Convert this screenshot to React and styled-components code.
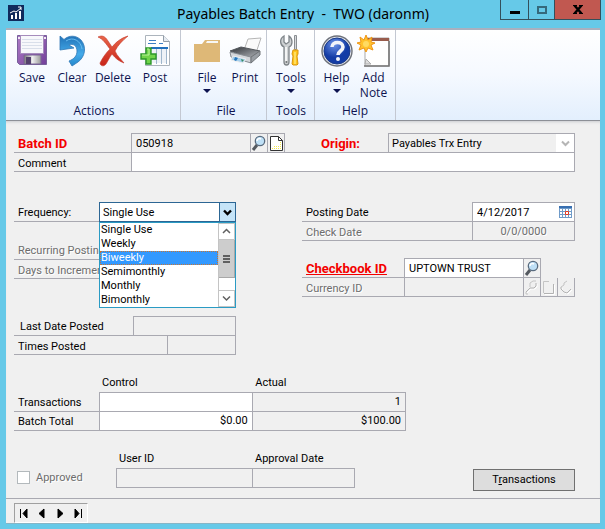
import React, { useState } from "react";
import styled, { createGlobalStyle, css } from "styled-components";

const GlobalStyle = createGlobalStyle`
	* {
		box-sizing: border-box;
	}
	body {
		margin: 0;
		background: #66c9e8;
		font-family: Roboto, "Liberation Sans", sans-serif;
		font-size: 11px;
		color: #000;
	}
	button, input, select {
		font: inherit;
		color: inherit;
		margin: 0;
	}
`;

const line = "#a9a9b1";

const Window = styled.main`
	display: flex;
	flex-direction: column;
	min-height: 100vh;
	padding: 0 5px 5px 6px;
	background: #66c9e8;
`;

const TitleBar = styled.header`
	position: relative;
	display: flex;
	justify-content: center;
	height: 28px;
`;

const AppIcon = styled.svg`
	position: absolute;
	left: 2px;
	top: 5px;
`;

const Title = styled.h1`
	margin: 0;
	font: 400 14px/28px "Noto Sans", "Open Sans", sans-serif;
	white-space: pre;
`;

const WindowControls = styled.div`
	position: absolute;
	top: 0;
	right: -1px;
	display: flex;
	border: 1px solid #33505c;
	border-top: 0;
`;

const WindowButton = styled.button`
	display: flex;
	align-items: center;
	justify-content: center;
	width: ${(p) => p.$width}px;
	height: 19px;
	padding: 0;
	border: 0;
	background: ${(p) => (p.$close ? "#c15850" : "transparent")};
	& + & {
		border-left: 1px solid #33505c;
	}
`;

const Ribbon = styled.nav`
	display: flex;
	height: 93px;
	border-top: 2px solid #a9b0bf;
	border-bottom: 1px solid #8d9097;
	background: linear-gradient(#fff, #f5f9ff 50%, #e3effd);
	font-family: "Open Sans", "Noto Sans", sans-serif;
	font-size: 12px;
	color: #0d1350;
`;

const RibbonGroup = styled.section`
	display: flex;
	flex-direction: column;
	justify-content: space-between;
	padding: 4px ${(p) => p.$end}px 2px ${(p) => p.$start}px;
	border-right: 1px solid #c3c8d2;
`;

const RibbonItems = styled.div`
	display: flex;
	align-items: flex-start;
`;

const GroupTitle = styled.h2`
	margin: 0;
	font-size: 12px;
	line-height: 15px;
	font-weight: 400;
	text-align: center;
`;

const RibbonButton = styled.button`
	display: flex;
	flex-direction: column;
	align-items: center;
	width: ${(p) => p.$width}px;
	padding: 0;
	border: 0;
	background: none;
	line-height: 15px;
	svg {
		flex: none;
	}
`;

const RibbonLabel = styled.span`
	margin-top: 3px;
`;

const Caret = styled.span`
	margin-top: 4px;
	border: 4px solid transparent;
	border-top-color: #0d1350;
	border-bottom: 0;
`;

const Form = styled.form`
	flex: 1;
	padding: 12px 25px 7px 8px;
	border-bottom: 1px solid ${line};
	background: #f0f0f0;
	box-shadow: inset 0 3px 3px -2px #c9cbd0;
`;

const Columns = styled.div`
	display: grid;
	grid-template-columns: 222px 1fr;
	column-gap: 66px;
	margin-top: 30px;
`;

const FieldGroup = styled.div`
	margin-top: ${(p) => p.$gap || 0}px;
`;

const boxBorders = css`
	border: 1px solid ${line};
	border-top-width: 0;
`;

const Row = styled.div`
	position: relative;
	display: flex;
	height: 20px;
	& + & {
		height: 19px;
	}
	&:first-child > :not(label) {
		border-top-width: 1px;
	}
`;

const disabledText = css`
	color: #6d6d6d;
	text-shadow: 1px 1px 0 #fff;
`;

const Label = styled.label`
	flex: ${(p) => (p.$width ? `0 0 ${p.$width}px` : "1")};
	padding-left: ${(p) => p.$indent || 4}px;
	border-bottom: ${(p) => (p.$plain ? 0 : 1)}px solid ${line};
	line-height: 21px;
	white-space: nowrap;
	${(p) => p.$disabled && disabledText}
	${(p) =>
		p.$required &&
		css`
			color: #f40000;
			font-size: 13px;
			font-weight: 700;
		`}
`;

const Field = styled.input`
	${boxBorders}
	flex: ${(p) => (p.$width ? `0 0 ${p.$width}px` : "1")};
	min-width: 0;
	padding: 0 4px;
	border-radius: 0;
	outline: 0;
	background: ${(p) => (p.$flat ? "#f0f0f0" : "#fff")};
	text-align: ${(p) => p.$align || "left"};
	${(p) => p.$disabled && disabledText}
`;

// sits one pixel over the row above so its top border doubles as that row's line
const CommentRow = styled(Row)`
	margin-top: -1px;
	&& {
		height: 20px;
	}
	label {
		padding-top: 1px;
	}
	input {
		border-top-width: 1px;
	}
`;

const LookupButton = styled.button`
	${boxBorders}
	display: flex;
	align-items: center;
	justify-content: center;
	flex: 0 0 17px;
	padding: 0;
	border-left: 0;
	background: #f0f0f0;
`;

const DateBox = styled.span`
	${boxBorders}
	display: flex;
	align-items: center;
	flex: 0 0 103px;
	min-width: 0;
	padding-right: 2px;
	background: #fff;
`;

const DateInput = styled.input`
	flex: 1;
	min-width: 0;
	padding: 0 4px;
	border: 0;
	outline: 0;
	background: none;
`;

const IconButton = styled.button`
	display: flex;
	align-items: center;
	padding: 0;
	border: 0;
	background: none;
`;

const SelectBox = styled.span`
	${boxBorders}
	display: flex;
	flex: 0 0 ${(p) => p.$width}px;
	border-color: ${(p) => (p.$active ? "#2c6694" : line)};
	background: #fff;
`;

const Select = styled.select`
	appearance: none;
	flex: 1;
	min-width: 0;
	padding: 0 3px;
	border: 0;
	border-radius: 0;
	outline: 0;
	background: ${(p) => (p.$flat ? "#f0f0f0" : "#fff")};
`;

const SelectArrow = styled.span`
	display: flex;
	align-items: center;
	justify-content: center;
	width: ${(p) => (p.$active ? 16 : 18)}px;
	color: ${(p) => (p.$active ? "#000" : "#b5b5b5")};
	${(p) =>
		p.$active &&
		css`
			border-left: 1px solid #2c6694;
			background: #c5e4f8;
		`}
`;

const DropDown = styled.div`
	position: absolute;
	z-index: 2;
	top: 20px;
	left: 85px;
	right: 0;
	display: flex;
	height: 86px;
	border: 1px solid #2a9bc4;
	background: #fff;
`;

const OptionList = styled.ul`
	flex: 1;
	margin: 0;
	padding: 0;
	list-style: none;
	overflow: hidden;
`;

const Option = styled.li`
	height: 14px;
	padding-left: 1px;
	line-height: 14px;
	${(p) =>
		p.$active &&
		css`
			outline: 1px dotted #c87533;
			outline-offset: -1px;
			background: #3399ff;
			color: #fff;
		`}
`;

const ScrollTrack = styled.div`
	display: flex;
	flex-direction: column;
	width: 17px;
	border-left: 1px solid #c4c4c4;
`;

const ScrollEnd = styled.span`
	display: flex;
	align-items: center;
	justify-content: center;
	height: 17px;
	border: 1px solid #c4c4c4;
	border-left: 0;
	color: #606060;
`;

const ScrollThumb = styled.span`
	display: flex;
	flex-direction: column;
	align-items: center;
	justify-content: center;
	gap: 1px;
	height: 38px;
	margin-bottom: auto;
	border: 1px solid #a8a8a8;
	border-width: 0 1px 1px 0;
	background: #cdcdcd;
	i {
		width: 7px;
		height: 2px;
		background: #606060;
	}
`;

const Totals = styled.table`
	width: 392px;
	margin-top: 18px;
	border-collapse: collapse;
	table-layout: fixed;
	tbody tr {
		height: 19px;
	}
	th {
		padding: 0 0 0 4px;
		font-weight: 400;
		text-align: left;
	}
	thead th {
		height: 19px;
		padding: 0 0 0 3px;
	}
	tbody th {
		padding-top: 2px;
		border-bottom: 1px solid ${line};
	}
	td {
		height: 19px;
		padding: 0 4px 0 0;
		border: 1px solid ${line};
		text-align: right;
	}
	col:first-child {
		width: 85px;
	}
`;

const TotalInput = styled.input`
	display: block;
	width: 100%;
	height: 18px;
	padding: 0;
	border: 0;
	outline: 0;
	background: none;
	text-align: right;
`;

const ControlCell = styled.td`
	background: #fff;
`;

const ApprovalRow = styled.div`
	display: flex;
	align-items: flex-end;
	margin-top: 19px;
`;

const Approved = styled.label`
	display: flex;
	align-items: center;
	gap: 6px;
	width: 102px;
	height: 26px;
	padding-left: 3px;
	${disabledText}
	input {
		appearance: none;
		width: 13px;
		height: 13px;
		border: 1px solid #b3b9bc;
		background: #fff;
	}
`;

const Stacked = styled.div`
	display: flex;
	flex-direction: column;
	width: ${(p) => p.$width}px;
	margin: 0 -1px 3px 0;
	label {
		padding-left: 3px;
		line-height: 18px;
	}
	input {
		width: 100%;
		height: 20px;
		border: 1px solid ${line};
		background: #f0f0f0;
	}
`;

const PushButton = styled.button`
	width: 102px;
	height: 22px;
	margin-left: auto;
	padding: 0;
	border: 1px solid #707070;
	background: #dddddd;
`;

const Footer = styled.footer`
	padding: 4px 8px 0;
	border-bottom: 1px solid #86b5c6;
	background: #f0f0f0;
`;

const Pager = styled.div`
	display: flex;
	justify-content: space-around;
	width: 74px;
	height: 20px;
	border: 1px solid #a0a0a0;
	border-right-color: #fff;
	border-bottom-color: #fff;
`;

const SaveIcon = () => (
	<svg width="32" height="33" viewBox="0 0 32 33">
		<defs>
			<linearGradient id="save" x1="0" y1="0" x2="1" y2="1">
				<stop offset="0" stopColor="#b07cc6" />
				<stop offset="1" stopColor="#73409a" />
			</linearGradient>
			<linearGradient id="metal">
				<stop offset="0" stopColor="#777" />
				<stop offset=".5" stopColor="#eee" />
				<stop offset="1" stopColor="#999" />
			</linearGradient>
		</defs>
		<path d="M1.500 1.500h29v29h-27l-2-2z" fill="url(#save)" stroke="#77609a" />
		<path d="M4.500 1.500h23v18h-23z" fill="#f7f8fb" stroke="#a68cbc" />
		<path d="M6 5.500h20M6 8.500h20M6 11.500h20M6 14.500h20" stroke="#d9dfea" />
		<path d="M8 21h17v9H8z" fill="url(#metal)" stroke="#796494" />
		<path d="M10 23h5v7h-5z" fill="#54426c" />
		<path d="M2 3h2v2H2zM28 3h2v2h-2z" fill="#f2e9f5" />
	</svg>
);

const ClearIcon = () => (
	<svg width="32" height="33" viewBox="0 0 32 33">
		<defs>
			<linearGradient id="undo" x1="0" y1="0" x2="0" y2="1">
				<stop offset="0" stopColor="#2173b8" />
				<stop offset=".6" stopColor="#45abea" />
				<stop offset="1" stopColor="#2487cb" />
			</linearGradient>
		</defs>
		<path
			d="M4 2l4 3.500C13 1 20 1 25 6c6 7 4 17-3 22l-6 4-3-5c5-2 8-5 8-10 0-5-4-8-8-6l5 3-14 2z"
			fill="url(#undo)"
			stroke="#3077b5"
			strokeWidth=".8"
			strokeLinejoin="round"
		/>
		<path d="M10 7c7-5 15 0 16 8" fill="none" stroke="#69bcef" />
	</svg>
);

const DeleteIcon = () => (
	<svg width="32" height="33" viewBox="0 0 32 33">
		<defs>
			<linearGradient id="del" x2="0" y2="1">
				<stop offset="0" stopColor="#e8664a" />
				<stop offset="1" stopColor="#c92419" />
			</linearGradient>
		</defs>
		<path
			d="M1 3c4-2 7-1 10 4l4 6c4-5 9-9 16-11-6 5-10 9-13 15 2 5 6 8 9 12-5-2-8-4-12-9-3 4-4 7-6 10-2 3-6 2-6-1 3-6 6-10 10-14C9 10 6 5 1 3z"
			fill="url(#del)"
			stroke="#c33a2c"
			strokeWidth=".6"
		/>
	</svg>
);

const PostIcon = () => (
	<svg width="32" height="33" viewBox="0 0 32 33">
		<path d="M6.500 1.500h18l6 6v24h-24z" fill="#fff" stroke="#acb4bc" />
		<path d="M24.500 1.500v6h6" fill="#e6ebf1" stroke="#929ca7" />
		<path d="M10 6.500h7M9 9.500h8M20 9.500h4" stroke="#3f7fc4" />
		<path d="M13 14h15v15H13z" fill="#eef2f7" />
		<path d="M12 14h17" stroke="#2270bd" strokeWidth="2" />
		<path d="M17.500 15v15M22.500 15v15M27.500 15v15" stroke="#9fb6cc" />
		<path d="M7 14h5v6h5v5h-5v5H7v-5H2v-5h5z" fill="#70d44a" stroke="#2b962a" strokeWidth="1.4" />
		<path d="M8 15h2v6H3" stroke="#b8f497" fill="none" />
	</svg>
);

const FolderIcon = () => (
	<svg width="32" height="33" viewBox="0 0 32 33">
		<path d="M3 10h8l3-4h15v22H3z" fill="#deb877" />
		<path d="M15 9l1-2h11v2z" fill="#f7f7f5" />
	</svg>
);

const PrintIcon = () => (
	<svg width="34" height="33" viewBox="0 0 34 33">
		<defs>
			<linearGradient id="prn" x1="0" y1="0" x2="1" y2="1">
				<stop offset="0" stopColor="#2f3237" />
				<stop offset="1" stopColor="#b5b9be" />
			</linearGradient>
		</defs>
		<path d="M20 5l13-1-5 15-12-3z" fill="#fafafa" stroke="#b5b5b5" />
		<path d="M2 17l11-4 19 4-9 7z" fill="url(#prn)" stroke="#53575c" />
		<path d="M2 18l21 5v6L3 23z" fill="#d3d6da" stroke="#868b91" />
		<path d="M23 23l9-6v4l-9 8z" fill="#999ea4" stroke="#717579" />
		<path d="M5 22l13 3-3 4-12-3z" fill="#a6cfec" stroke="#eee" />
		<path d="M7 23l3 1-2 3-2-1z" fill="#2776bb" />
		<path d="M13 25l3 1-2 2z" fill="#398b62" />
	</svg>
);

const ToolsIcon = () => (
	<svg width="32" height="33" viewBox="0 0 32 33">
		<path
			d="M9 2v6l2 2 3-2V2c4 3 4 9 0 11v15c0 4-5 4-5 0V13C5 11 4 5 9 2z"
			fill="#ced1d3"
			stroke="#7f8589"
			strokeWidth="1.3"
		/>
		<path d="M11 13v14" stroke="#fff" strokeWidth="1.5" />
		<circle cx="11.500" cy="28" r="1" fill="#737779" />
		<path d="M19.500 1.500h2v14h-2z" fill="#d6d8db" stroke="#898d91" />
		<path d="M18 16h5v4l-1 2 1 8-1 1h-4l-1-1 1-8-1-2z" fill="#ffc51b" stroke="#d99510" />
		<path d="M20 18v12" stroke="#ffe579" strokeWidth="1.5" />
	</svg>
);

const HelpIcon = () => (
	<svg width="34" height="33" viewBox="0 0 34 33">
		<defs>
			<radialGradient id="help" cx=".4" cy=".25">
				<stop offset="0" stopColor="#6e94e8" />
				<stop offset="1" stopColor="#133ca6" />
			</radialGradient>
		</defs>
		<circle cx="17" cy="17" r="15" fill="#e4e6eb" stroke="#6c7079" strokeWidth="1.4" />
		<circle cx="17" cy="17" r="13" fill="url(#help)" stroke="#193a88" />
		<path
			d="M12 13c0-6 11-6 11 0 0 4-5 4-5 8"
			fill="none"
			stroke="#f3f5fa"
			strokeWidth="3.6"
		/>
		<circle cx="18" cy="25" r="2" fill="#f3f5fa" />
	</svg>
);

const NoteIcon = () => (
	<svg width="34" height="33" viewBox="0 0 34 33">
		<path d="M8 4h24v28H8z" fill="#fff" stroke="#a9a9a9" />
		<path d="M8 4h24v3H8z" fill="#985c4d" />
		<path d="M32 7v25H7" fill="none" stroke="#777" strokeWidth="1.6" />
		<path d="M9 25l5 5H8z" fill="#ddd" stroke="#aaa" />
		<path
			d="M9 1l2 5 4-3-1 5 4 1-4 2 2 5-5-2-2 4-2-4-5 2 2-5-4-2 4-1-1-5 4 3z"
			fill="#ffc22d"
			stroke="#f09516"
		/>
		<circle cx="9" cy="10" r="3" fill="#ffdb62" />
	</svg>
);

const MagnifierIcon = () => (
	<svg width="16" height="17" viewBox="0 0 16 17">
		<path d="M6 10l-4 5" stroke="#555a60" strokeWidth="3" />
		<circle cx="9" cy="6" r="4.7" fill="#bfe0f6" stroke="#596b7e" strokeWidth="1.3" />
		<path d="M6 6c0-2 2-3 4-2" stroke="#fff" strokeWidth="1.5" fill="none" />
	</svg>
);

const PageIcon = () => (
	<svg width="13" height="15" viewBox="0 0 13 15">
		<path d="M.5.5h8l4 4v10H.5z" fill="#fff" stroke="#333" />
		<path d="M8.500.5v4h4" fill="none" stroke="#333" />
		<path d="M2 12.500h9M4 10.500h7M10.500 6v4" stroke="#f4e94a" strokeDasharray="1 1" fill="none" />
	</svg>
);

const GhostIcon = ({ d, shadow }) => (
	<svg width="16" height="17" viewBox="0 0 16 17" fill="none">
		<path d={shadow} stroke="#fff" transform="translate(1 1)" />
		<path d={shadow} stroke="#b2b2b2" />
		<path d={d} stroke="#c4c4c4" />
	</svg>
);

const CalendarIcon = () => (
	<svg width="13" height="12" viewBox="0 0 13 12">
		<path d="M0 0h13v12H0z" fill="#6f9bc9" />
		<path d="M0 0h13v2H0z" fill="#386fb1" />
		<path
			d="M1 3h2v2H1zM4 3h2v2H4zM7 3h2v2H7zM10 3h2v2h-2zM1 6h2v2H1zM4 6h2v2H4zM10 6h2v2h-2zM1 9h2v2H1zM4 9h2v2H4zM7 9h2v2H7zM10 9h2v2h-2z"
			fill="#fff"
		/>
		<path d="M6.500 5.500h3v3h-3z" fill="#fff" stroke="#e33b22" />
	</svg>
);

const Chevron = ({ up, width = 2 }) => (
	<svg width="9" height="7" viewBox="0 0 9 7">
		<path d={up ? "M1 5l3.500-3.500L8 5" : "M1 1.500L4.500 5 8 1.500"} fill="none" stroke="currentColor" strokeWidth={width} />
	</svg>
);

const frequencies = ["Single Use", "Weekly", "Biweekly", "Semimonthly", "Monthly", "Bimonthly"];

const ribbon = [
	{
		title: "Actions",
		start: 6,
		end: 4,
		items: [
			{ label: "Save", width: 40, icon: <SaveIcon /> },
			{ label: "Clear", width: 40, icon: <ClearIcon /> },
			{ label: "Delete", width: 42, icon: <DeleteIcon /> },
			{ label: "Post", width: 42, icon: <PostIcon /> },
		],
	},
	{
		title: "File",
		start: 7,
		end: 2,
		items: [
			{ label: "File", width: 38, icon: <FolderIcon />, menu: true },
			{ label: "Print", width: 38, icon: <PrintIcon /> },
		],
	},
	{
		title: "Tools",
		start: 2,
		end: 1,
		items: [{ label: "Tools", width: 44, icon: <ToolsIcon />, menu: true }],
	},
	{
		title: "Help",
		start: 3,
		end: 3,
		items: [
			{ label: "Help", width: 37, icon: <HelpIcon />, menu: true },
			{ label: "Add Note", width: 37, icon: <NoteIcon /> },
		],
	},
];

const pages = [
	{ name: "First", d: "M1.500 1v9M8 1v9L4 5.500z" },
	{ name: "Previous", d: "M7 1v9L2 5.500z" },
	{ name: "Next", d: "M3 1v9l5-4.500z" },
	{ name: "Last", d: "M2 1v9l4-4.500zM8.500 1v9" },
];

export default function App() {
	const [frequency, setFrequency] = useState("Single Use");
	const [comment, setComment] = useState("");
	return (
		<>
			<GlobalStyle />
			<Window>
				<TitleBar>
					<AppIcon width="16" height="16" viewBox="0 0 16 16">
						<path d="M0 0h16v16H0z" fill="#102a5c" />
						<path d="M3 10h2v4H3zM7 8h2v6H7zM11 6h2v8h-2z" fill="#fff" />
						<path d="M2 8l4-2 2 1 5-4M10 2h3v3" fill="none" stroke="#fff" />
					</AppIcon>
					<Title>Payables Batch Entry  -  TWO (daronm)</Title>
					<WindowControls>
						<WindowButton type="button" $width={27} aria-label="Minimize">
							<svg width="10" height="10">
								<path d="M0 6h10v3H0z" />
							</svg>
						</WindowButton>
						<WindowButton type="button" $width={26} aria-label="Maximize">
							<svg width="10" height="8">
								<path d="M1 1h8v6H1z" fill="none" stroke="#35697c" strokeWidth="2" />
							</svg>
						</WindowButton>
						<WindowButton type="button" $width={46} $close aria-label="Close">
							<svg width="10" height="9">
								<path d="M1.500 .5l7 8M8.500 .5l-7 8" stroke="#000" strokeWidth="2.400" />
								<path d="M0 .5h4M6 .5h4M0 8.500h4M6 8.500h4" stroke="#000" />
							</svg>
						</WindowButton>
					</WindowControls>
				</TitleBar>

				<Ribbon>
					{ribbon.map((group) => (
						<RibbonGroup key={group.title} $start={group.start} $end={group.end}>
							<RibbonItems>
								{group.items.map((item) => (
									<RibbonButton key={item.label} type="button" $width={item.width}>
										{item.icon}
										<RibbonLabel>{item.label}</RibbonLabel>
										{item.menu ? <Caret /> : null}
									</RibbonButton>
								))}
							</RibbonItems>
							<GroupTitle>{group.title}</GroupTitle>
						</RibbonGroup>
					))}
				</Ribbon>

				<Form onSubmit={(e) => e.preventDefault()}>
					<FieldGroup>
						<Row>
							<Label htmlFor="batch" $width={117} $required>
								Batch ID
							</Label>
							<Field id="batch" $width={120} $flat defaultValue="050918" />
							<LookupButton type="button" aria-label="Look up batch">
								<MagnifierIcon />
							</LookupButton>
							<LookupButton type="button" aria-label="Batch note">
								<PageIcon />
							</LookupButton>
							<Label htmlFor="origin" $indent={36} $required $plain>
								Origin:
							</Label>
							<SelectBox $width={187}>
								<Select id="origin" $flat defaultValue="Payables Trx Entry">
									<option>Payables Trx Entry</option>
								</Select>
								<SelectArrow>
									<Chevron />
								</SelectArrow>
							</SelectBox>
						</Row>
						<CommentRow>
							<Label htmlFor="comment" $width={117}>
								Comment
							</Label>
							<Field id="comment" value={comment} onChange={(e) => setComment(e.target.value)} />
						</CommentRow>
					</FieldGroup>

					<Columns>
						<div>
							<FieldGroup>
								<Row>
									<Label htmlFor="frequency" $width={85}>
										Frequency:
									</Label>
									<SelectBox $width={137} $active>
										<Select id="frequency" value={frequency} onChange={(e) => setFrequency(e.target.value)}>
											{frequencies.map((name) => (
												<option key={name}>{name}</option>
											))}
										</Select>
										<SelectArrow $active>
											<Chevron width={2.4} />
										</SelectArrow>
									</SelectBox>
									<DropDown>
										<OptionList role="listbox" aria-label="Frequency">
											{frequencies.map((name) => (
												<Option
													key={name}
													role="option"
													aria-selected={name === "Biweekly"}
													$active={name === "Biweekly"}
													onClick={() => setFrequency(name)}
												>
													{name}
												</Option>
											))}
										</OptionList>
										<ScrollTrack>
											<ScrollEnd>
												<Chevron up width={1.5} />
											</ScrollEnd>
											<ScrollThumb>
												<i />
												<i />
												<i />
											</ScrollThumb>
											<ScrollEnd>
												<Chevron width={1.5} />
											</ScrollEnd>
										</ScrollTrack>
									</DropDown>
								</Row>
							</FieldGroup>
							<FieldGroup $gap={18}>
								<Row>
									<Label htmlFor="recurring" $width={119} $disabled>
										Recurring Posting
									</Label>
									<Field id="recurring" $width={40} $flat disabled />
								</Row>
								<Row>
									<Label htmlFor="increment" $width={119} $disabled>
										Days to Increment
									</Label>
									<Field id="increment" $width={40} $flat disabled />
								</Row>
							</FieldGroup>
							<FieldGroup $gap={37}>
								<Row>
									<Label htmlFor="lastPosted" $width={119} $indent={6}>
										Last Date Posted
									</Label>
									<Field id="lastPosted" $flat readOnly />
								</Row>
								<Row>
									<Label htmlFor="timesPosted" $width={153}>
										Times Posted
									</Label>
									<Field id="timesPosted" $flat readOnly />
								</Row>
							</FieldGroup>
						</div>

						<div>
							<FieldGroup>
								<Row>
									<Label htmlFor="postingDate">Posting Date</Label>
									<DateBox>
										<DateInput id="postingDate" defaultValue="4/12/2017" />
										<IconButton type="button" aria-label="Open calendar">
											<CalendarIcon />
										</IconButton>
									</DateBox>
								</Row>
								<Row>
									<Label htmlFor="checkDate" $disabled>
										Check Date
									</Label>
									<Field id="checkDate" $width={103} $flat $disabled $align="center" readOnly value="0/0/0000" />
								</Row>
							</FieldGroup>
							<FieldGroup $gap={17}>
								<Row>
									<Label htmlFor="checkbook" $width={102} $required>
										<u>Checkbook ID</u>
									</Label>
									<Field id="checkbook" $width={120} defaultValue="UPTOWN TRUST" />
									<LookupButton type="button" aria-label="Look up checkbook">
										<MagnifierIcon />
									</LookupButton>
								</Row>
								<Row>
									<Label htmlFor="currency" $width={102} $disabled>
										Currency ID
									</Label>
									<Field id="currency" $width={120} $flat readOnly />
									<LookupButton type="button" disabled aria-label="Look up currency">
										<GhostIcon d="M6 8V4l3-2h3M2 13v2h2" shadow="M2 13l4-4h4l2-2V4" />
									</LookupButton>
									<LookupButton type="button" disabled aria-label="Currency note">
										<GhostIcon d="M2.500 14V2.500H8" shadow="M3 14.500h9.500V5" />
									</LookupButton>
									<LookupButton type="button" disabled aria-label="Currency rate">
										<GhostIcon d="M9 2L6 4v2L3 8" shadow="M3 8v2l3 3 3 1 4-4" />
									</LookupButton>
								</Row>
							</FieldGroup>
						</div>
					</Columns>

					<Totals>
						<colgroup>
							<col />
							<col />
							<col />
						</colgroup>
						<thead>
							<tr>
								<th />
								<th scope="col">Control</th>
								<th scope="col">Actual</th>
							</tr>
						</thead>
						<tbody>
							<tr>
								<th scope="row">Transactions</th>
								<ControlCell>
									<TotalInput aria-label="Control transactions" />
								</ControlCell>
								<td>1</td>
							</tr>
							<tr>
								<th scope="row">Batch Total</th>
								<ControlCell>
									<TotalInput aria-label="Control batch total" defaultValue="$0.00" />
								</ControlCell>
								<td>$100.00</td>
							</tr>
						</tbody>
					</Totals>

					<ApprovalRow>
						<Approved>
							<input type="checkbox" disabled />
							Approved
						</Approved>
						<Stacked $width={137}>
							<label htmlFor="userId">User ID</label>
							<input id="userId" readOnly />
						</Stacked>
						<Stacked $width={103}>
							<label htmlFor="approvalDate">Approval Date</label>
							<input id="approvalDate" readOnly />
						</Stacked>
						<PushButton type="button">
							T<u>r</u>ansactions
						</PushButton>
					</ApprovalRow>
				</Form>

				<Footer>
					<Pager>
						{pages.map((page) => (
							<IconButton key={page.name} type="button" aria-label={page.name}>
								<svg width="10" height="11" viewBox="0 0 10 11">
									<path d={page.d} stroke="#000" />
								</svg>
							</IconButton>
						))}
					</Pager>
				</Footer>
			</Window>
		</>
	);
}
